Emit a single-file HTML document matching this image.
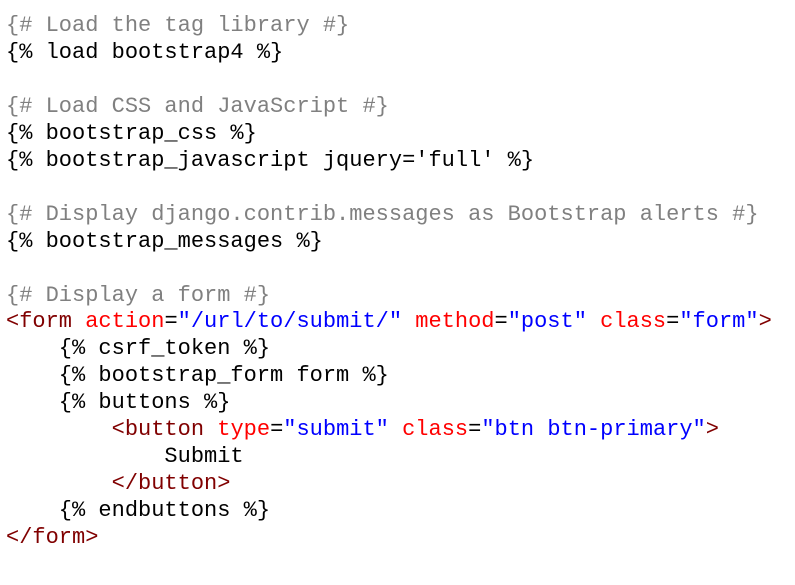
<!DOCTYPE html>
<html><head><style>
html,body{margin:0;padding:0;background:#fff;width:795px;height:585px;overflow:hidden}
pre{margin:0;position:absolute;left:6px;top:13px;font-family:"Liberation Mono",monospace;font-size:22px;line-height:26.95px;color:#000}
.c{color:#808080}.t{color:#800000}.a{color:#ff0000}.v{color:#0000ff}
</style></head><body>
<pre><span class="c">{# Load the tag library #}</span>
{% load bootstrap4 %}

<span class="c">{# Load CSS and JavaScript #}</span>
{% bootstrap_css %}
{% bootstrap_javascript jquery='full' %}

<span class="c">{# Display django.contrib.messages as Bootstrap alerts #}</span>
{% bootstrap_messages %}

<span class="c">{# Display a form #}</span>
<span class="t">&lt;form</span> <span class="a">action</span>=<span class="v">"/url/to/submit/"</span> <span class="a">method</span>=<span class="v">"post"</span> <span class="a">class</span>=<span class="v">"form"</span><span class="t">&gt;</span>
    {% csrf_token %}
    {% bootstrap_form form %}
    {% buttons %}
        <span class="t">&lt;button</span> <span class="a">type</span>=<span class="v">"submit"</span> <span class="a">class</span>=<span class="v">"btn btn-primary"</span><span class="t">&gt;</span>
            Submit
        <span class="t">&lt;/button&gt;</span>
    {% endbuttons %}
<span class="t">&lt;/form&gt;</span></pre>
</body></html>
